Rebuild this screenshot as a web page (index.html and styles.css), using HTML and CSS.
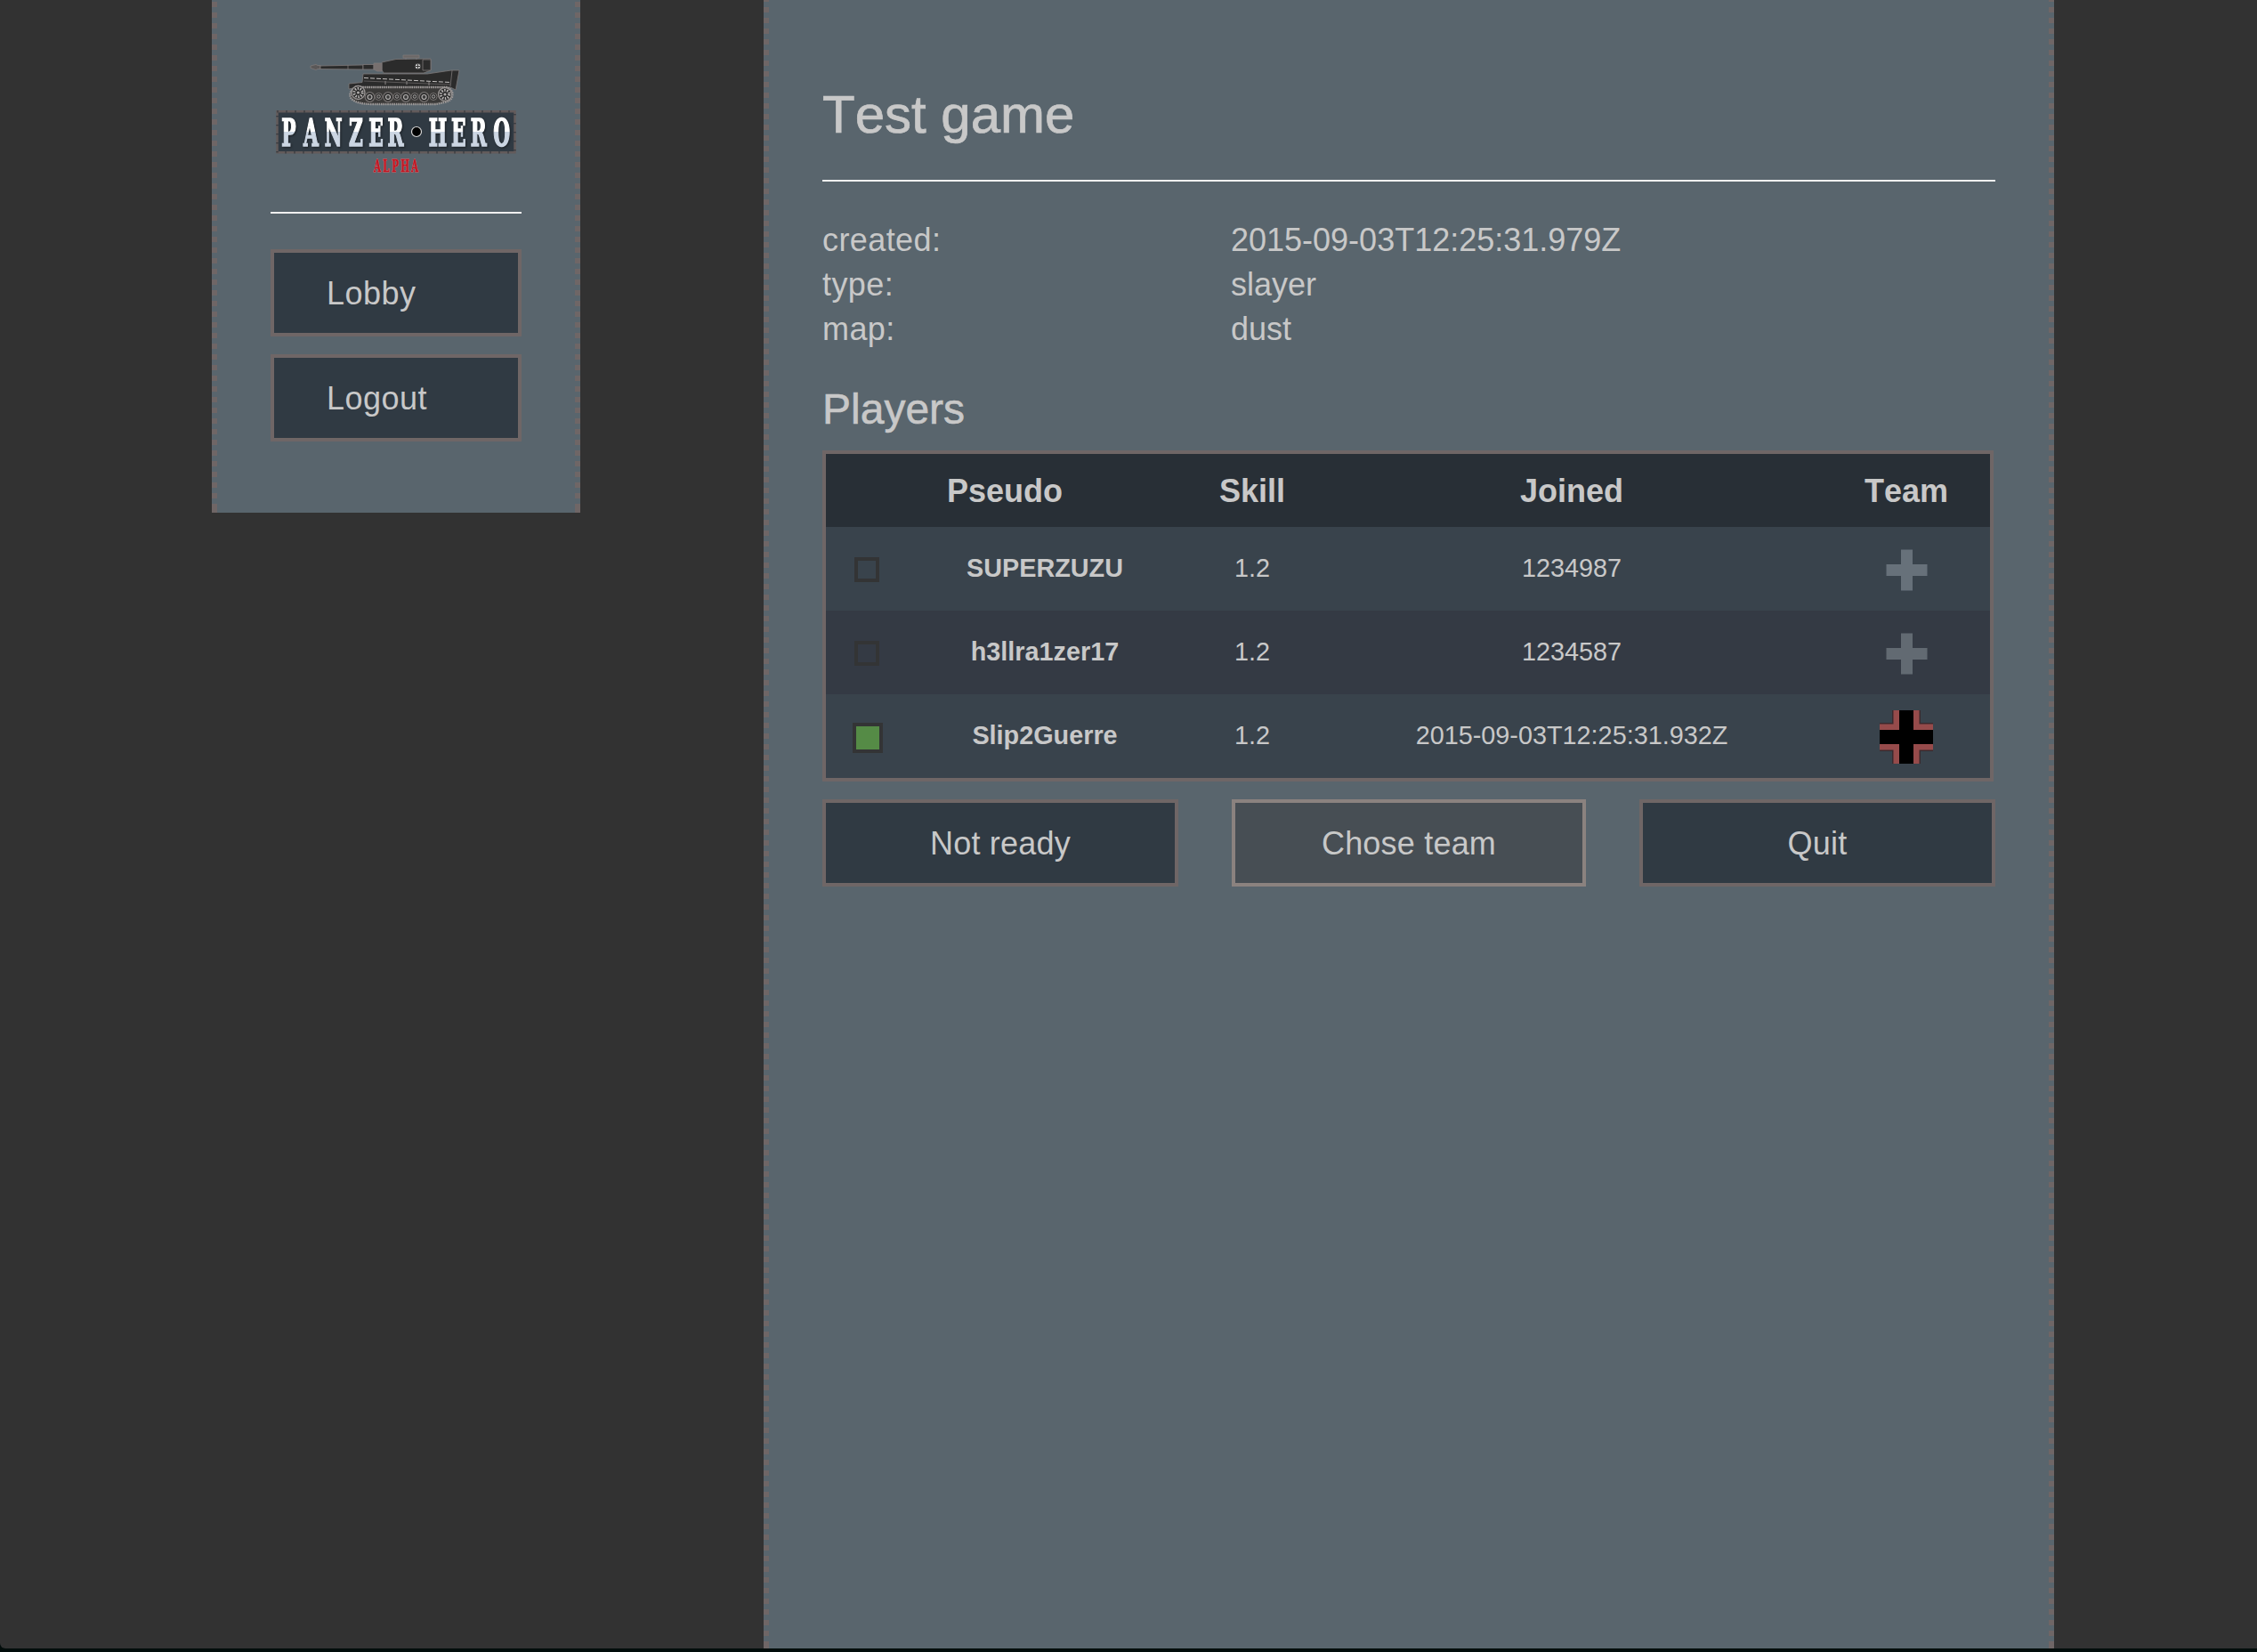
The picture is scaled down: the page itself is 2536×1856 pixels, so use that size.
FILE: index.html
```html
<!DOCTYPE html>
<html lang="en">
<head>
<meta charset="utf-8">
<title>Panzer Hero</title>
<link rel="stylesheet" href="styles.css">
</head>
<body>
<div class="page">
  <aside class="sidebar">
    <svg class="logo" viewBox="300 50 300 160" role="img" aria-label="Panzer Hero Alpha">
      <defs>
        <linearGradient id="steel" x1="0" y1="0" x2="0" y2="1" gradientUnits="objectBoundingBox">
          <stop offset="0.48" stop-color="#fff"/>
          <stop offset="0.48" stop-color="#ccd6e3"/>
        </linearGradient>
        <g id="wheel">
          <circle r="5.3" fill="#2b2b2b" stroke="#777372" stroke-width="1.2"/>
          <circle r="2.5" fill="#3c3c3c" stroke="#b5b2b1" stroke-width="1.2"/>
        </g>
        <g id="wheel-back">
          <circle r="4" fill="#2b2b2b" stroke="#777372" stroke-width="1"/>
          <circle r="1.8" fill="#3a3a3a" stroke="#a3a09f" stroke-width="1"/>
        </g>
        <g id="sprocket">
          <circle r="7.5" fill="#2b2b2b" stroke="#989493" stroke-width="1.3"/>
          <circle r="4.6" fill="none" stroke="#bbb8b7" stroke-width="3" stroke-dasharray="1.4 1.5"/>
          <circle r="1.6" fill="#aaa7a6"/>
        </g>
      </defs>
      <g stroke="#7d7978" stroke-width=".8" stroke-linejoin="round">
        <path fill="#5a5757" d="M349 74l6-1.500 2 1h3v4h-3l-2 1-6-2z"/>
        <path fill="#2b2b2b" d="M360 74l48-1v5l-48-.5z"/>
        <path d="M391 73v5"/>
        <path fill="#2b2b2b" d="M408 72.500h12v5.500h-12z"/>
        <path fill="#2b2b2b" d="M429 78.500v-8.500l16-3.500 39-.5v13l-8 3h-45z"/>
        <path fill="#77706f" d="M420 71h9v9h-5l-4-2z"/>
        <path fill="#2b2b2b" d="M475 67h9v12h-9z"/>
        <path fill="#6b6766" d="M453 62h18v3h-18zM456 65v2M468 65v2"/>
        <path fill="#2b2b2b" d="M392 100v-6l15-1.500 1-9.500h72l27-4h9l-4 22-6-3h-104z"/>
        <path d="M508 79l-2 18"/>
      </g>
      <circle cx="469.500" cy="74.500" r="3.200" fill="#ddd" stroke="#222" stroke-width=".8"/>
      <path d="M467 74.500h5M469.500 72v5" stroke="#333" stroke-width="1"/>
      <path d="M409 87.500l97 5" stroke="#c6c3c2" stroke-width="1" stroke-dasharray="5 2"/>
      <path d="M409 91l97 4" stroke="#7d7978" stroke-width=".6"/>
      <path d="M433 91v4M457 91v4M482 92v4" stroke="#8a8685"/>
      <path d="M400 98h102q8 3 6 11-2 5-9 6l-9 2h-71q-18 0-24-6-5-7 5-13z" fill="#3a3938" stroke="#9b9796" stroke-width="2.400" stroke-dasharray="1.600 .8"/>
      <use href="#wheel-back" x="425.500" y="108.500"/><use href="#wheel-back" x="446" y="108.500"/><use href="#wheel-back" x="466" y="108.500"/><use href="#wheel-back" x="487" y="108.500"/>
      <use href="#wheel" x="415.500" y="109"/><use href="#wheel" x="436" y="109"/><use href="#wheel" x="456" y="109"/><use href="#wheel" x="476.500" y="109"/>
      <use href="#sprocket" x="402.500" y="104"/><use href="#sprocket" x="500" y="106"/>
      <path fill="#303a43" stroke="#635b5b" stroke-width="2.500" d="M311.500 125.200h267v46h-267z"/>
      <path fill="none" stroke="#2b3037" stroke-width="2.500" stroke-dasharray="1 9" d="M311.500 125.200h267v46h-267z"/>
      <g class="logo-word">
        <text transform="scale(.56 1)" y="164" x="579.100 623.800 669.100 714.300 754.500 793.800">PANZER</text>
        <text transform="scale(.56 1)" y="164" x="878.600 920.200 960.400 1006.800">HERO</text>
      </g>
      <circle cx="468" cy="148" r="5.500" fill="#000" stroke="#d8d8d8" stroke-width="1.200"/>
      <text class="logo-tag" transform="scale(.6 1)" y="193.500" x="706.700 723.300 740 758.300 776.700">ALPHA</text>
    </svg>
    <hr class="rule">
    <nav class="menu">
      <a class="button button-left">Lobby</a>
      <a class="button button-left">Logout</a>
    </nav>
  </aside>
  <main class="content">
    <h1 class="title">Test game</h1>
    <hr class="rule">
    <dl class="details">
      <dt>created:</dt><dd>2015-09-03T12:25:31.979Z</dd>
      <dt>type:</dt><dd>slayer</dd>
      <dt>map:</dt><dd>dust</dd>
    </dl>
    <h2 class="subtitle">Players</h2>
    <div class="players">
      <div class="row head"><span class="wide">Pseudo</span><span>Skill</span><span>Joined</span><span>Team</span></div>
      <div class="row">
        <i class="check"></i><b>SUPERZUZU</b><span>1.2</span><span>1234987</span>
        <svg class="team" viewBox="0 0 60 60"><path class="plus" d="M24 7.500h13v16.500h16.500v13H37v16.500H24V37H7.500V24H24z"/></svg>
      </div>
      <div class="row even">
        <i class="check"></i><b>h3llra1zer17</b><span>1.2</span><span>1234587</span>
        <svg class="team" viewBox="0 0 60 60"><path class="plus" d="M24 7.500h13v16.500h16.500v13H37v16.500H24V37H7.500V24H24z"/></svg>
      </div>
      <div class="row">
        <i class="check ready"></i><b>Slip2Guerre</b><span>1.2</span><span>2015-09-03T12:25:31.932Z</span>
        <svg class="team" viewBox="0 0 60 60">
          <path fill="#3a2a2e" d="M14 0h32v14h14v32H46v14H14V46H0V14h14z"/>
          <path fill="#964b4b" d="M15.500 0h29v15.500H60v29H44.500V60h-29V44.500H0v-29h15.500z"/>
          <path fill="#000" d="M22 0h16v22h22v16H38v22H22V38H0V22h22z"/>
        </svg>
      </div>
    </div>
    <div class="actions">
      <a class="button">Not ready</a>
      <a class="button active">Chose team</a>
      <a class="button">Quit</a>
    </div>
  </main>
</div>
</body>
</html>
```
FILE: styles.css
```css
* { box-sizing: border-box; }

body {
  margin: 0;
  height: 1856px;
  background: #020d0b;
  color: #c8c8c8;
  font: 36px/50px "Liberation Sans", Helvetica, Arial, sans-serif;
  font-kerning: none;
  overflow: hidden;
}

.page {
  display: flex;
  align-items: flex-start;
  gap: 206px;
  height: 1852px;
  padding-left: 238px;
  background: #323232;
  border-bottom-left-radius: 6px;
}

.sidebar,
.content {
  --dash: repeating-linear-gradient(to bottom, #6f6666 0 6px, transparent 6px 12px);
  --end: linear-gradient(#6f6666, #6f6666);
  background-color: #59656d;
  background-image: var(--dash), var(--dash), var(--end), var(--end);
  background-repeat: repeat-y, repeat-y, no-repeat, no-repeat;
  background-size: 6px 12px, 6px 12px, 6px 8px, 6px 8px;
  background-position: left 0 top 2px, right 0 top 2px, left bottom, right bottom;
}

.sidebar {
  width: 414px;
  height: 576px;
  padding: 50px 66px 0;
}

.content {
  width: 1450px;
  height: 1852px;
  padding: 99px 66px 0;
  background-position: left 0 top 8px, right 0 top 8px, left bottom, right bottom;
}

.logo {
  display: block;
  width: 300px;
  height: 160px;
  margin-left: -4px;
}

.logo-word {
  font: bold 43px "DejaVu Serif Condensed", "DejaVu Serif", serif;
  fill: url(#steel);
  stroke: url(#steel);
  stroke-width: 1.6px;
  text-anchor: middle;
  filter: drop-shadow(1px 1px 1px #1b2025);
}

.logo-tag {
  font: bold 19px "DejaVu Serif Condensed", "DejaVu Serif", serif;
  fill: #c01622;
  stroke: #c01622;
  stroke-width: 0.8px;
  text-anchor: middle;
  filter: drop-shadow(0 0 0.6px #e0d4d4);
}

.rule {
  height: 2px;
  margin: 0;
  border: 0;
  background: #f0f0f0;
}

.sidebar .rule { margin-top: 28px; }

.menu {
  display: grid;
  gap: 20px;
  margin-top: 40px;
}

.button {
  display: block;
  height: 98px;
  border: 4px solid #6f6666;
  background: #303a43;
  line-height: 91px;
  letter-spacing: 0.2px;
  text-align: center;
}

.button-left {
  padding-left: 59px;
  letter-spacing: 0.5px;
  text-align: left;
}

.button.active {
  border-color: #8b827f;
  background: #474e54;
}

.title {
  margin: 0 0 43px;
  font-size: 60px;
  line-height: 60px;
  font-weight: 400;
  -webkit-text-stroke: 0.7px;
}

.details {
  display: grid;
  grid-template-columns: 459px 1fr;
  margin: 41px 0 0;
}

.details dt { letter-spacing: 0.4px; }

.details dd { margin: 0; }

.subtitle {
  margin: 37px 0 18px;
  font-size: 48px;
  line-height: 56px;
  font-weight: 400;
  -webkit-text-stroke: 0.6px;
}

.players {
  width: 1316px;
  border: 4px solid #6f6666;
}

.row {
  display: grid;
  grid-template-columns: 90px 312px 154px 564px 188px;
  grid-template-rows: 94px;
  align-items: center;
  justify-items: center;
  height: 94px;
  background: #39434c;
  font-size: 28.8px;
  line-height: 92px;
}

.row > span,
.row > b { align-self: start; }

.row.even { background: #343a44; }

.row.head {
  grid-template-rows: 82px;
  height: 82px;
  background: #282f36;
  font-size: 36px;
  font-weight: 700;
  line-height: 84px;
}

.wide { grid-column: span 2; }

.check {
  width: 28px;
  height: 28px;
  margin: 2px 0 0 2px;
  border: 4px solid #333435;
}

.check.ready {
  width: 34px;
  height: 34px;
  margin: 4px 0 0 4px;
  background: #558b46;
}

.team {
  width: 60px;
  height: 60px;
  margin-top: 2px;
}

.plus { fill: #67717a; }
.even .plus { fill: #626a72; }

.actions {
  display: grid;
  grid-template-columns: 400px 398px 400px;
  gap: 60px;
  margin-top: 20px;
}
```
